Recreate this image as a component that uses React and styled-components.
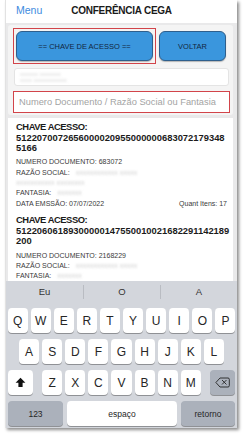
import React from "react";
import styled, { createGlobalStyle } from "styled-components";

const GlobalStyle = createGlobalStyle`
  html, body { margin: 0; padding: 0; background: #ffffff; }
  body { font-family: "Liberation Sans", Arial, sans-serif; }
  * { box-sizing: border-box; }
`;

const Stage = styled.div`
  width: 246px;
  height: 439px;
  padding-left: 5px;
`;

const Phone = styled.div`
  width: 232px;
  height: 428px;
  display: flex;
  flex-direction: column;
  overflow: hidden;
  background: #e9e9ea;
  box-shadow: 2px 2px 3px rgba(0, 0, 0, 0.45);
  border-left: 1px solid #e2e2e2;
`;

const NavBar = styled.div`
  flex: 0 0 23px;
  background: #ffffff;
  display: grid;
  grid-template-columns: 1fr auto 1fr;
  align-items: center;
  padding-bottom: 3px;
`;

const NavLink = styled.span`
  padding-left: 10px;
  font-size: 10.5px;
  color: #3d8be0;
`;

const NavTitle = styled.span`
  font-size: 10px;
  font-weight: bold;
  letter-spacing: -0.25px;
  color: #1a1a1a;
`;

const Content = styled.div`
  flex: 1;
  overflow: hidden;
  padding: 2px 4px 0 2px;
`;

const Panel = styled.div`
  background: #f4f4f4;
  border-radius: 3px;
  padding: 3px 3px 2px 5px;
`;

const ButtonRow = styled.div`
  display: flex;
  align-items: center;
  gap: 3px;
`;

const Highlight = styled.div`
  width: 143px;
  border: 1px solid #d2444a;
  padding: 2px;
  display: flex;
`;

const ActionButton = styled.button`
  flex: ${(p) => (p.$wide ? "1" : "0 0 67px")};
  height: 30px;
  border: 1px solid #2f5f8c;
  border-radius: 6px;
  background: #3a96dd;
  color: #13263d;
  font-family: "Liberation Sans", Arial, sans-serif;
  font-size: 7.5px;
  padding: 0;
  box-shadow: 0 1px 1px rgba(0, 0, 0, 0.25);
`;

const Field = styled.div`
  margin: ${(p) => (p.$alert ? "5px 0 0 0" : "4px 1px 0 1px")};
  height: ${(p) => (p.$alert ? "22px" : "18px")};
  background: #ffffff;
  border: 1px solid ${(p) => (p.$alert ? "#d2444a" : "#e4e4e4")};
  border-radius: ${(p) => (p.$alert ? "0" : "3px")};
  display: flex;
  flex-direction: column;
  justify-content: center;
  padding-left: 5px;
  overflow: hidden;
`;

const Placeholder = styled.span`
  font-size: 9.3px;
  color: #a3a3a3;
  white-space: nowrap;
`;

const Redacted = styled.span`
  display: block;
  font-size: 6px;
  line-height: 6px;
  color: #d6d6d6;
  filter: blur(1.2px);
  white-space: nowrap;
`;

const Card = styled.div`
  margin-top: 3px;
  background: #ffffff;
  padding: 0 6px 0 8px;
`;

const Entry = styled.div`
  padding: 4px 0 3px;
`;

const KeyLine = styled.div`
  font-size: 9.4px;
  line-height: 10.5px;
  font-weight: bold;
  color: #1b1b1b;
  white-space: nowrap;
  letter-spacing: ${(p) => (p.$label ? "-0.45px" : "0")};
`;

const KeyBlock = styled.div`
  margin-bottom: 3px;
`;

const InfoRow = styled.div`
  display: flex;
  justify-content: space-between;
  align-items: center;
  height: 10.4px;
  font-size: 7px;
  color: #3a3a3a;
  white-space: nowrap;
`;

const InfoLabel = styled.span`
  display: flex;
  align-items: center;
  gap: 6px;
`;

const Blur = styled.span`
  display: inline-block;
  color: #d0d0d0;
  filter: blur(1.3px);
`;

const Keyboard = styled.div`
  flex: 0 0 147px;
  background: #d3d6dc;
  display: flex;
  flex-direction: column;
`;

const Suggestions = styled.div`
  height: 22px;
  display: grid;
  grid-template-columns: repeat(3, 1fr);
  align-items: center;
`;

const Suggestion = styled.span`
  text-align: center;
  font-size: 9.5px;
  color: #333;
  border-left: ${(p) => (p.$first ? "none" : "1px solid #b9bcc2")};
  line-height: 14px;
`;

const Keys = styled.div`
  padding: 5px 2px 2px;
  display: flex;
  flex-direction: column;
  gap: 6px;
`;

const Row = styled.div`
  height: 25px;
  display: flex;
  gap: ${(p) => p.$gap || "3px"};
  justify-content: ${(p) => p.$justify || "center"};
`;

const Group = styled.div`
  display: flex;
  gap: 3px;
`;

const Key = styled.div`
  flex: ${(p) => (p.$grow ? "1" : `0 0 ${p.$w || "20.1px"}`)};
  height: 25px;
  border-radius: 4px;
  background: ${(p) => (p.$dark ? "#abb1bb" : "#ffffff")};
  box-shadow: 0 1px 0 rgba(0, 0, 0, 0.32);
  display: flex;
  align-items: center;
  justify-content: center;
  font-size: ${(p) => (p.$small ? "8.5px" : "12px")};
  color: #262626;
`;

const keyRows = ["QWERTYUIOP", "ASDFGHJKL", "ZXCVBNM"];

const entries = [
  {
    key: ["5122070072656000020955000000683072179348", "5166"],
    doc: "683072",
    razaoWrap: true,
    date: "07/07/2022",
    itens: "17",
  },
  {
    key: ["51220606189300000147550010021682291142189", "200"],
    doc: "2168229",
    razaoWrap: false,
  },
];

function ShiftIcon() {
  return (
    <svg width="11" height="11" viewBox="0 0 11 11">
      <path d="M5.5 0.8 L10.4 5.8 H7.6 V10 H3.4 V5.8 H0.6 Z" fill="#111" />
    </svg>
  );
}

function BackIcon() {
  return (
    <svg width="15" height="11" viewBox="0 0 15 11">
      <path
        d="M5 1 H13 a1.3 1.3 0 0 1 1.3 1.3 V8.7 a1.3 1.3 0 0 1 -1.3 1.3 H5 L0.9 5.5 Z"
        fill="none"
        stroke="#222"
        strokeWidth="0.9"
        strokeLinejoin="round"
      />
      <path d="M7.3 3.3 L11.2 7.2 M11.2 3.3 L7.3 7.2" stroke="#222" strokeWidth="0.9" strokeLinecap="round" />
    </svg>
  );
}

function EntryCard({ e }) {
  return (
    <Entry>
      <KeyBlock>
        <KeyLine $label>CHAVE ACESSO:</KeyLine>
        {e.key.map((l) => (
          <KeyLine key={l}>{l}</KeyLine>
        ))}
      </KeyBlock>
      <InfoRow>
        <span>NUMERO DOCUMENTO: {e.doc}</span>
      </InfoRow>
      <InfoRow>
        <InfoLabel>
          RAZÃO SOCIAL: <Blur>xxxxxxxxxxxx xxxxx</Blur>
        </InfoLabel>
      </InfoRow>
      {e.razaoWrap && (
        <InfoRow>
          <Blur>xxxxxxxxxxx xxxxxxxx</Blur>
        </InfoRow>
      )}
      <InfoRow>
        <InfoLabel>
          FANTASIA: <Blur>xxxxxxx</Blur>
        </InfoLabel>
      </InfoRow>
      {e.date && (
        <InfoRow>
          <span>DATA EMSSÃO: {e.date}</span>
          <span>Quant Itens: {e.itens}</span>
        </InfoRow>
      )}
    </Entry>
  );
}

export default function App() {
  return (
    <>
      <GlobalStyle />
      <Stage>
        <Phone>
          <NavBar>
            <NavLink>Menu</NavLink>
            <NavTitle>CONFERÊNCIA CEGA</NavTitle>
            <span />
          </NavBar>
          <Content>
            <Panel>
              <ButtonRow>
                <Highlight>
                  <ActionButton $wide>== CHAVE DE ACESSO ==</ActionButton>
                </Highlight>
                <ActionButton>VOLTAR</ActionButton>
              </ButtonRow>
              <Field>
                <Redacted>xxxxxx xxxxxxx</Redacted>
                <Redacted>xxxx xxxxxxxxxxx</Redacted>
              </Field>
              <Field $alert>
                <Placeholder>Numero Documento / Razão Social ou Fantasia</Placeholder>
              </Field>
            </Panel>
            <Card>
              {entries.map((e) => (
                <EntryCard key={e.doc} e={e} />
              ))}
            </Card>
          </Content>
          <Keyboard>
            <Suggestions>
              <Suggestion $first>Eu</Suggestion>
              <Suggestion>O</Suggestion>
              <Suggestion>A</Suggestion>
            </Suggestions>
            <Keys>
              <Row>
                {keyRows[0].split("").map((k) => (
                  <Key key={k}>{k}</Key>
                ))}
              </Row>
              <Row>
                {keyRows[1].split("").map((k) => (
                  <Key key={k}>{k}</Key>
                ))}
              </Row>
              <Row $justify="space-between">
                <Key $w="25px">
                  <ShiftIcon />
                </Key>
                <Group>
                  {keyRows[2].split("").map((k) => (
                    <Key key={k}>{k}</Key>
                  ))}
                </Group>
                <Key $w="25px" $dark>
                  <BackIcon />
                </Key>
              </Row>
              <Row $gap="4px">
                <Key $w="55px" $dark $small>
                  123
                </Key>
                <Key $grow $small>
                  espaço
                </Key>
                <Key $w="54px" $dark $small>
                  retorno
                </Key>
              </Row>
            </Keys>
          </Keyboard>
        </Phone>
      </Stage>
    </>
  );
}
